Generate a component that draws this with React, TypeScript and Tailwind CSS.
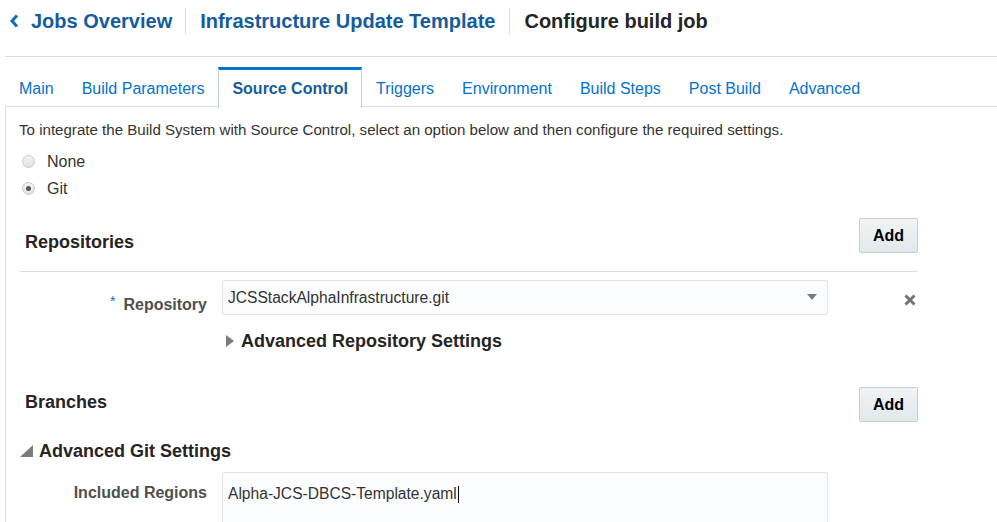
import React, { useState } from "react";

const tabs = [
  "Main",
  "Build Parameters",
  "Source Control",
  "Triggers",
  "Environment",
  "Build Steps",
  "Post Build",
  "Advanced",
];

// Кнопка "Add" в заголовке секции
const AddButton = () => (
  <button className="h-[35px] w-[59px] rounded-[2px] border border-[#c4ced7] bg-gradient-to-b from-[#f1f3f5] to-[#e3e8eb] text-[16px] font-bold text-[#000]">
    Add
  </button>
);

const Radio = ({ checked, label }: { checked: boolean; label: string }) => (
  <div className="flex h-[27px] items-center">
    <span className="ml-[3px] flex h-[13px] w-[13px] items-center justify-center rounded-full border border-[#c9c9c9] bg-gradient-to-b from-[#f4f4f4] to-[#e2e2e2]">
      {checked && <span className="h-[5px] w-[5px] rounded-full bg-[#555]" />}
    </span>
    <span className="ml-[12px] text-[16px] leading-[18px] text-[#333]">{label}</span>
  </div>
);

export default function App() {
  const [active, setActive] = useState("Source Control");
  const [git, setGit] = useState(true);

  return (
    <div className="h-[522px] w-[997px] overflow-hidden bg-white font-['Liberation_Sans',Arial,sans-serif]">
      {/* Хлебные крошки */}
      <header className="ml-[5px] h-[57px] border-b border-[#d6dfe6]">
        <div className="flex h-[42px] items-center">
          <svg width="9" height="14" viewBox="0 0 9 14" className="ml-[5px] mr-[12px]">
            <polyline points="7,1.5 2,7 7,12.5" fill="none" stroke="#0f6bbf" strokeWidth="3" />
          </svg>
          <a className="text-[20px] font-bold text-[#145c9e]">Jobs Overview</a>
          <span className="ml-[13px] mr-[14px] h-[26px] border-l border-[#d6dfe6]" />
          <a className="text-[20px] font-bold text-[#145c9e]">Infrastructure Update Template</a>
          <span className="ml-[14px] mr-[14px] h-[26px] border-l border-[#d6dfe6]" />
          <span className="text-[20px] font-bold text-[#252525]">Configure build job</span>
        </div>
      </header>

      {/* Вкладки */}
      <nav className="relative z-10 ml-[5px] mt-[10px] flex h-[40px] -mb-px">
        {tabs.map((t) => {
          const on = t === active;
          return (
            <button
              key={t}
              onClick={() => setActive(t)}
              className={
                on
                  ? "h-[41px] border-x border-t-[3px] border-[#c4ced7] border-t-[#0572ce] bg-white px-[13px] text-[16px] font-bold text-[#145c9e]"
                  : "h-[40px] border-x border-t-[3px] border-transparent px-[13px] text-[16px] text-[#0572ce]"
              }
            >
              {t}
            </button>
          );
        })}
      </nav>

      <main className="ml-[5px] border-l border-t border-[#d6dfe6] pl-[13px] pt-[14px]">
        <p className="text-[15.1px] leading-[18px] text-[#333]">
          To integrate the Build System with Source Control, select an option below and then configure the
          required settings.
        </p>
        <div className="mt-[9px]" onClick={() => setGit(!git)}>
          <Radio checked={!git} label="None" />
          <Radio checked={git} label="Git" />
        </div>

        {/* Репозитории */}
        <section className="mt-[16px] w-[899px]">
          <div className="flex items-start justify-between border-b border-[#d6dfe6] pb-[18px]">
            <h2 className="pl-[6px] pt-[14px] text-[18px] font-bold leading-[21px] text-[#252525]">Repositories</h2>
            <AddButton />
          </div>
          <div className="mt-[8px] flex items-start">
            <div className="w-[188px] pt-[16px] text-right text-[16px] font-bold leading-[18px] text-[#4f4f4f]">
              <span className="mr-[8px] align-top text-[14px] font-normal leading-[10px] text-[#0572ce]">*</span>
              Repository
            </div>
            <div className="ml-[15px] flex h-[35px] w-[606px] items-center justify-between rounded-[2px] border border-[#dfe4e7] bg-[#fbfcfd] px-[5px]">
              <span className="text-[15.6px] text-[#333]">JCSStackAlphaInfrastructure.git</span>
              <svg width="10" height="7" viewBox="0 0 10 7" className="mr-[5px]">
                <polygon points="0,0 10,0 5,6" fill="#7b7b7b" />
              </svg>
            </div>
            <svg width="12" height="12" viewBox="0 0 12 12" className="ml-[76px] mt-[14px]">
              <path d="M1.5 1.5 L10.5 10.5 M10.5 1.5 L1.5 10.5" stroke="#747474" strokeWidth="3" />
            </svg>
          </div>
          <div className="ml-[207px] mt-[15px] flex h-[22px] items-center">
            <svg width="8" height="12" viewBox="0 0 8 12">
              <polygon points="0,0 8,6 0,12" fill="#7b7b7b" />
            </svg>
            <span className="ml-[7px] text-[18px] font-bold text-[#252525]">Advanced Repository Settings</span>
          </div>
        </section>

        {/* Ветки */}
        <section className="mt-[35px] w-[899px]">
          <div className="flex items-start justify-between">
            <h2 className="pl-[6px] pt-[5px] text-[18px] font-bold leading-[21px] text-[#252525]">Branches</h2>
            <AddButton />
          </div>
          <div className="mt-[18px] flex h-[22px] items-center">
            <svg width="13" height="12" viewBox="0 0 13 12" className="ml-[1px]">
              <polygon points="13,0 13,12 0,12" fill="#7b7b7b" />
            </svg>
            <span className="ml-[6px] text-[18px] font-bold text-[#252525]">Advanced Git Settings</span>
          </div>
          <div className="mt-[10px] flex items-start">
            <div className="w-[188px] pt-[12px] text-right text-[16px] font-bold leading-[18px] text-[#4f4f4f]">
              Included Regions
            </div>
            <div className="ml-[15px] h-[70px] w-[606px] rounded-[2px] border border-[#dfe4e7] bg-[#fbfcfd] px-[5px] pt-[9px]">
              <span className="text-[15.6px] leading-[18px] text-[#333]">Alpha-JCS-DBCS-Template.yaml</span>
              <span className="ml-px inline-block h-[17px] w-px bg-black align-middle" />
            </div>
          </div>
        </section>
      </main>
    </div>
  );
}
